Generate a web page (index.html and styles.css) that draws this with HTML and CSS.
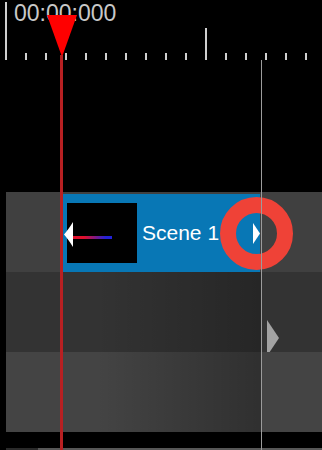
FILE: index.html
```html
<!DOCTYPE html>
<html lang="en">
<head>
    <meta charset="UTF-8">
    <meta name="viewport" content="width=device-width, initial-scale=1.0">
    <title>Timeline</title>
    <link rel="stylesheet" href="styles.css">
</head>
<body>
    <div class="timeline">
        <div class="ruler">
            <span class="time">00:00:000</span>
            <div class="tick major"></div>
            <div class="tick"></div>
            <div class="tick"></div>
            <div class="tick"></div>
            <div class="tick"></div>
            <div class="tick"></div>
            <div class="tick"></div>
            <div class="tick"></div>
            <div class="tick"></div>
            <div class="tick"></div>
            <div class="tick mid"></div>
            <div class="tick"></div>
            <div class="tick"></div>
            <div class="tick"></div>
            <div class="tick"></div>
            <div class="tick"></div>
        </div>

        <div class="tracks">
            <div class="track track-1">
                <div class="clip">
                    <div class="thumb">
                        <div class="thumb-line"></div>
                    </div>
                    <div class="clip-name">Scene 1</div>
                    <svg class="handle handle-left" width="9" height="25" viewBox="0 0 9 25">
                        <path d="M9 0 L9 25 Q4 17 0 12.5 Q4 8 9 0 Z" fill="#fff"/>
                    </svg>
                    <svg class="handle handle-right" width="7" height="21" viewBox="0 0 7 21">
                        <path d="M0 0 L7 10.5 L0 21 Z" fill="#fff"/>
                    </svg>
                </div>
            </div>
            <div class="track track-2">
                <svg class="track-arrow" width="12" height="36" viewBox="0 0 12 36">
                    <path d="M0 0 L12 18 L0 36 Z" fill="#a3a3a3"/>
                </svg>
            </div>
            <div class="track track-3"></div>
        </div>

        <div class="scrollbar">
            <div class="scroll-thumb"></div>
        </div>

        <div class="ring"></div>
        <div class="end-line"></div>

        <div class="playhead">
            <svg class="playhead-head" width="30" height="42" viewBox="0 0 30 42">
                <polygon points="0,0 30,0 15,42" fill="#ff0000"/>
            </svg>
            <div class="playhead-line"></div>
        </div>
    </div>
</body>
</html>
```

FILE: styles.css
```css
* {
    margin: 0;
    padding: 0;
    box-sizing: border-box;
    font-family: 'Liberation Sans', Arial, Helvetica, sans-serif;
}

body {
    background-color: #000;
    overflow: hidden;
}

.timeline {
    position: relative;
    width: 322px;
    height: 450px;
    overflow: hidden;
}

/* ruler */
.ruler {
    position: relative;
    display: flex;
    align-items: flex-end;
    gap: 18px;
    height: 60px;
    padding-left: 5px;
}

.time {
    position: absolute;
    left: 14px;
    top: 2px;
    font-size: 23px;
    line-height: 23px;
    color: #c8c8c8;
}

.tick {
    flex: none;
    width: 2px;
    height: 7px;
    background-color: #cfcfcf;
}

.tick.major {
    height: 58px;
}

.tick.mid {
    height: 32px;
}

/* tracks */
.tracks {
    margin-top: 132px;
    margin-left: 6px;
}

.track {
    position: relative;
    height: 80px;
}

.track-1 {
    background-color: #404040;
}

.track-2 {
    background: linear-gradient(to right, rgba(0, 0, 0, 0) 90px, rgba(0, 0, 0, 0.26) 255px, rgba(0, 0, 0, 0) 255px), #333;
}

.track-3 {
    background: linear-gradient(to right, rgba(0, 0, 0, 0) 90px, rgba(0, 0, 0, 0.3) 255px, rgba(0, 0, 0, 0) 255px), #444;
}

.clip {
    position: absolute;
    left: 56px;
    top: 2px;
    width: 198px;
    height: 78px;
    display: flex;
    align-items: center;
    background-color: #0877b5;
}

.thumb {
    position: relative;
    width: 70px;
    height: 60px;
    margin-left: 5px;
    background-color: #000;
}

.thumb-line {
    position: absolute;
    left: 5px;
    top: 33px;
    width: 40px;
    height: 3px;
    background: linear-gradient(to right, #e0102c 30%, #2222d8 85%);
}

.clip-name {
    margin-left: 5px;
    font-size: 21px;
    color: #fff;
}

.handle {
    position: absolute;
    z-index: 1;
}

.handle-left {
    left: 2px;
    top: 28px;
}

.handle-right {
    left: 191px;
    top: 29px;
}

.track-arrow {
    position: absolute;
    left: 261px;
    top: 48px;
}

/* overlays */
.ring {
    position: absolute;
    left: 220px;
    top: 197px;
    width: 73px;
    height: 73px;
    border: 16px solid #ef4237;
    border-radius: 50%;
}

.end-line {
    position: absolute;
    left: 261px;
    top: 60px;
    bottom: 0;
    width: 1px;
    background-color: #9c9c9c;
}

.scrollbar {
    height: 2px;
    margin-top: 16px;
    margin-left: 6px;
    background-color: #575757;
}

.scroll-thumb {
    width: 32px;
    height: 100%;
    background-color: #2a2a2a;
}

.playhead {
    position: absolute;
    left: 47px;
    top: 15px;
    bottom: 0;
    width: 30px;
}

.playhead-head {
    display: block;
}

.playhead-line {
    position: absolute;
    left: 13px;
    top: 40px;
    bottom: 0;
    width: 3px;
    background-color: #b82022;
}
```
